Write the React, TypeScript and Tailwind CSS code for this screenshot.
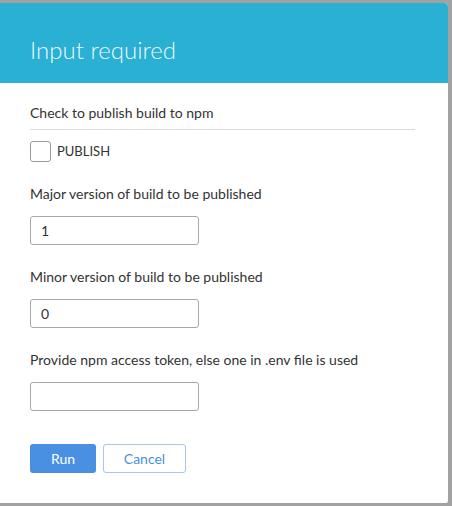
import React, { useState } from 'react';

const Field: React.FC<{ label: string; value: string; onChange: (v: string) => void }> = ({ label, value, onChange }) => (
  <div className="flex flex-col">
    <label className="text-[14px] leading-[16px] text-[#333]">{label}</label>
    <input
      type="text"
      value={value}
      onChange={(e) => onChange(e.target.value)}
      className="mt-[14px] w-[169px] h-[29px] rounded-[3px] border border-[#a8a8a8] px-[10px] text-[14px] text-[#333] outline-none"
    />
  </div>
);

const App: React.FC = () => {
  const [publish, setPublish] = useState(false);
  const [major, setMajor] = useState('1');
  const [minor, setMinor] = useState('0');
  const [token, setToken] = useState('');

  return (
    <div className="w-[452px] h-[506px] bg-[#a2a2a2] pt-[3px] overflow-hidden font-['Lato','Liberation_Sans',sans-serif]">
      <div className="w-[448px] h-[500px] bg-white rounded-tr-[4px] rounded-br-[2px] flex flex-col">
        <div className="h-[80px] bg-[#29b0d3] rounded-tr-[4px] flex items-center px-[30px] pt-[13px]">
          <h2 className="text-[24px] font-light text-white/95 leading-none">Input required</h2>
        </div>

        <div className="flex flex-col px-[30px] pt-[22px]">
          <div className="text-[14px] leading-[16px] text-[#333] w-[385px] pb-[8px] border-b border-[#dcdcdc]">
            Check to publish build to npm
          </div>
          <label className="flex items-center gap-[6px] mt-[11px] cursor-pointer">
            <span
              onClick={() => setPublish(!publish)}
              className="w-[21px] h-[21px] rounded-[3px] border border-[#9a9a9a] bg-white flex items-center justify-center text-[13px]"
            >
              {publish ? '✓' : ''}
            </span>
            <span className="text-[13px] text-[#333]">PUBLISH</span>
          </label>

          <div className="flex flex-col gap-[24px] mt-[24px]">
            <Field label="Major version of build to be published" value={major} onChange={setMajor} />
            <Field label="Minor version of build to be published" value={minor} onChange={setMinor} />
            <Field label="Provide npm access token, else one in .env file is used" value={token} onChange={setToken} />
          </div>

          <div className="flex gap-[7px] mt-[33px]">
            <button className="w-[66px] h-[29px] rounded-[3px] bg-[#4a90e2] text-white text-[14px]">Run</button>
            <button className="w-[83px] h-[29px] rounded-[3px] border border-[#a6c8f0] text-[#4a90e2] text-[14px] bg-white">
              Cancel
            </button>
          </div>
        </div>
      </div>
    </div>
  );
};

export default App;
